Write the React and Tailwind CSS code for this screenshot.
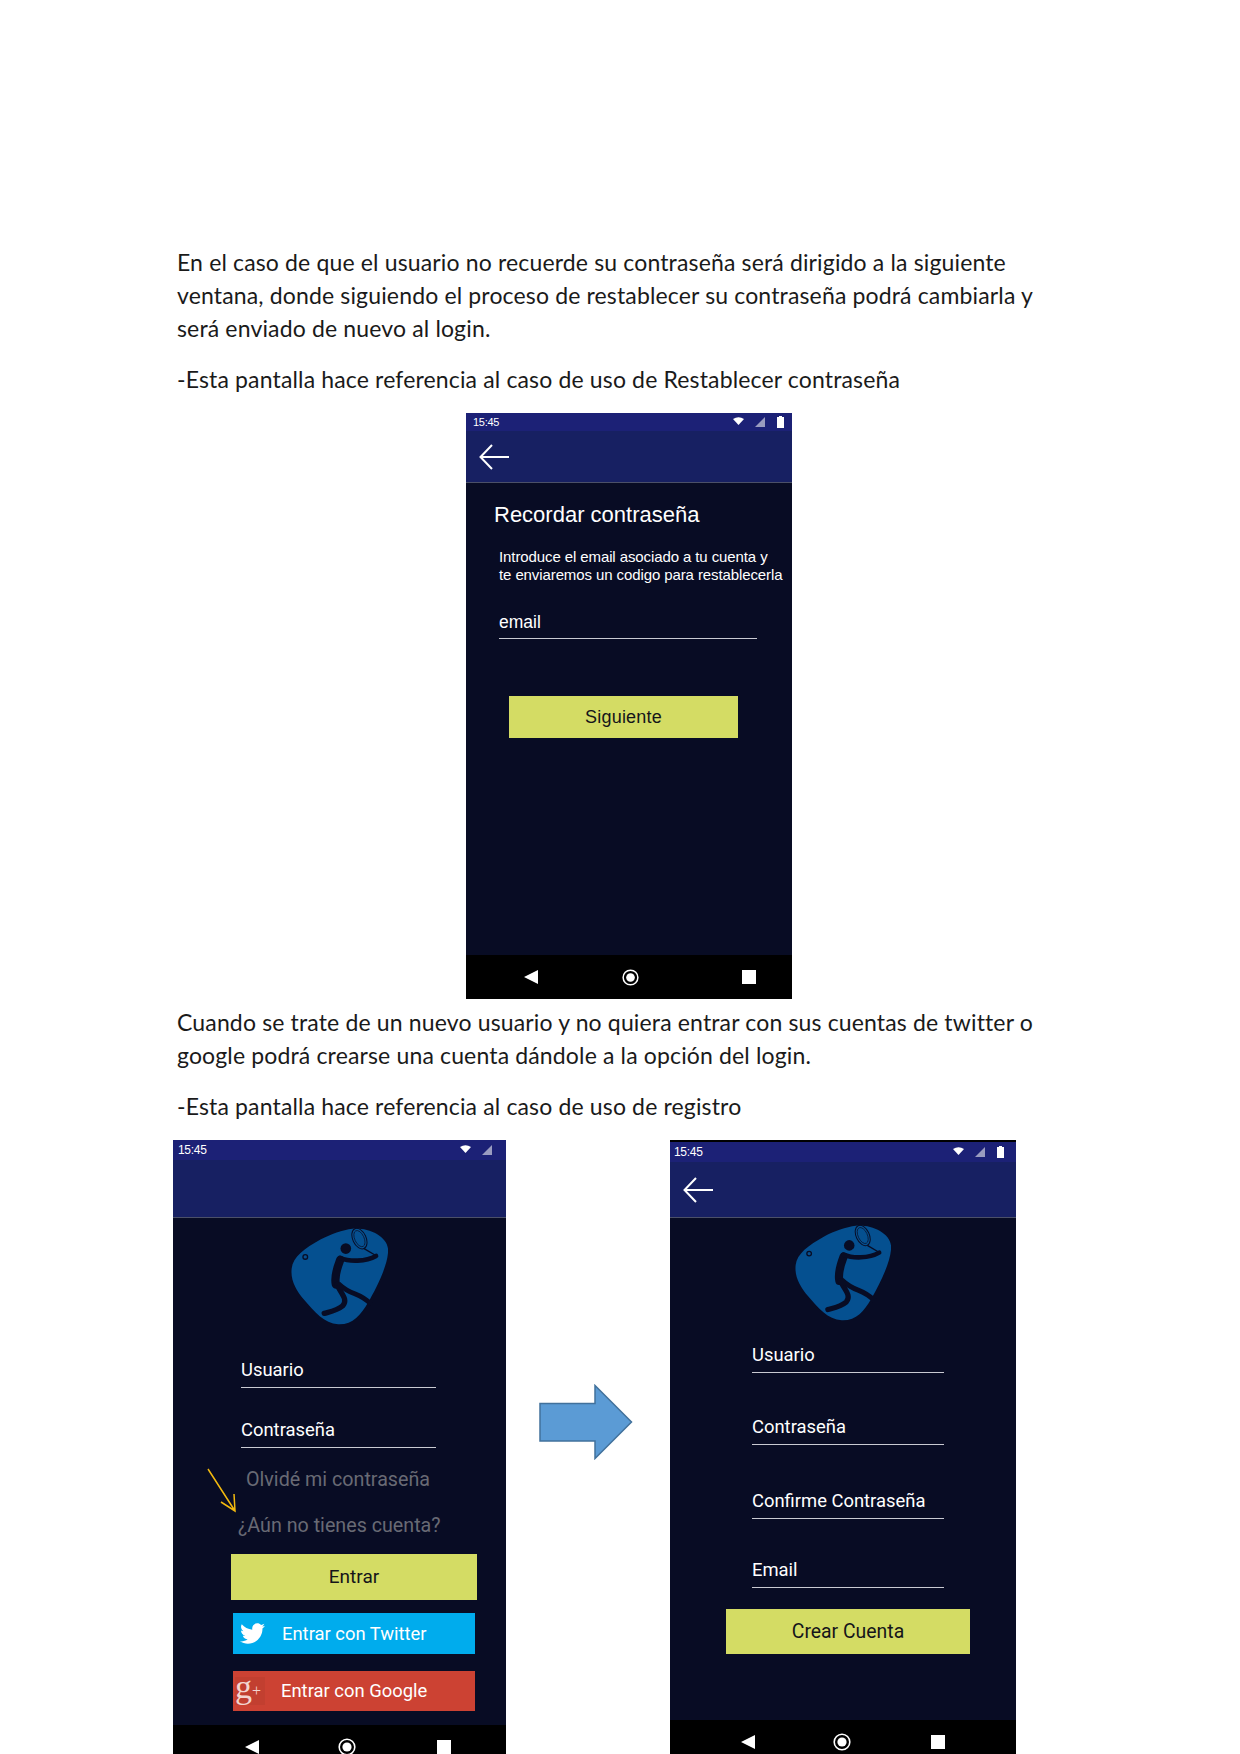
import React from 'react';
import { FaTwitter } from 'react-icons/fa';

const TennisLogo = ({ className }) => (
    <svg viewBox="30 38 292 292" className={className}>
        <path d="M215 40 C262 36 318 62 322 100 C326 140 290 215 262 262 C240 300 215 330 172 328 C130 326 100 290 70 255 C45 225 28 195 32 160 C36 125 70 100 120 72 C150 56 185 44 215 40 Z" fill="#055090" />
        <circle cx="195" cy="100" r="16" fill="#080c24" />
        <path d="M178 134 C168 160 160 185 165 208" fill="none" stroke="#080c24" strokeWidth="25" strokeLinecap="round" />
        <path d="M168 208 C182 238 202 252 186 272 C168 287 148 290 130 295" fill="none" stroke="#080c24" strokeWidth="16" strokeLinecap="round" />
        <path d="M178 128 C205 140 255 140 286 122" fill="none" stroke="#080c24" strokeWidth="14" strokeLinecap="round" />
        <path d="M172 205 C190 222 205 230 222 236 C240 243 258 254 272 268" fill="none" stroke="#080c24" strokeWidth="15" />
        <ellipse cx="236" cy="70" rx="20" ry="33" transform="rotate(-25 236 70)" fill="none" stroke="#080c24" strokeWidth="3" />
        <ellipse cx="236" cy="70" rx="14" ry="26" transform="rotate(-25 236 70)" fill="none" stroke="#080c24" strokeWidth="2" />
        <path d="M250 100 L284 120" stroke="#080c24" strokeWidth="4" />
        <circle cx="73" cy="125" r="7" fill="none" stroke="#080c24" strokeWidth="4" />
    </svg>
);

const BackArrow = ({ className }) => (
    <svg viewBox="0 0 30 26" className={className}>
        <path d="M30 13 H2 M13 1 L1.5 13 L13 25" fill="none" stroke="white" strokeWidth="2" />
    </svg>
);

const StatusBar = ({ battery = true, height, pad, icons, text }) => (
    <div className={`${height} ${pad} ${text} bg-[#1c2176] flex items-center text-white font-['Liberation_Sans'] tracking-[-0.3px] shrink-0`}>
        <span>15:45</span>
        <svg viewBox="0 0 53 14" className={`w-[53px] h-[14px] ml-auto shrink-0 ${icons}`}>
            <path d="M1 4 Q6.5 0.5 12 4 L6.5 10 Z" fill="white" />
            <path d="M33 12 L33 2 L23 12 Z" fill="#9a9cc0" />
            {battery && <path d="M47 2 V1 H50 V2 H52 V13 H45 V2 Z" fill="white" />}
        </svg>
    </div>
);

const NavBar = ({ pad, gapA, gapB, ring = 'w-[17px] h-[17px]' }) => (
    <div className={`h-[44px] bg-black flex items-center shrink-0 ${pad}`}>
        <svg viewBox="0 0 14 14" className="w-[14px] h-[14px]"><path d="M14 0 V14 L0 7 Z" fill="white" /></svg>
        <svg viewBox="0 0 18 18" className={`${ring} ${gapA}`}>
            <circle cx="9" cy="9" r="7.8" fill="none" stroke="white" strokeWidth="1.6" />
            <circle cx="9" cy="9" r="4.6" fill="white" />
        </svg>
        <div className={`w-[14px] h-[14px] bg-white ${gapB}`} />
    </div>
);

const Phone = ({ width, height, topLine, status, barHeight, back, nav, children }) => (
    <div className={`${width} ${height} flex flex-col bg-[#080c24] shrink-0 overflow-hidden`}>
        {topLine && <div className="h-[2px] bg-black shrink-0" />}
        <StatusBar {...status} />
        <div className={`${barHeight} bg-[#172062] border-b border-[#4b5068] flex items-center pl-[13px] shrink-0`}>
            {back && <BackArrow className="w-[30px] h-[26px]" />}
        </div>
        <div className="flex-1 flex flex-col">{children}</div>
        {nav}
    </div>
);

const Field = ({ label, className }) => (
    <div className={`h-[28px] border-b border-[#c9cad2] text-white text-[18.4px] leading-[20px] font-[Roboto] ${className}`}>
        {label}
    </div>
);

const Paragraph = ({ children, className = '' }) => (
    <p className={`text-[23px] leading-[33px] font-[Lato] text-[#1a1a1a] tracking-[0.15px] whitespace-nowrap ${className}`}>
        {children}
    </p>
);

export default function App() {
    return (
        <div className="relative w-[1240px] h-[1754px] bg-white overflow-hidden">
            <div className="pt-[246px] pl-[177px]">
                <Paragraph>En el caso de que el usuario no recuerde su contraseña será dirigido a la siguiente</Paragraph>
                <Paragraph>ventana, donde siguiendo el proceso de restablecer su contraseña podrá cambiarla y</Paragraph>
                <Paragraph>será enviado de nuevo al login.</Paragraph>
                <Paragraph className="mt-[18px]">-Esta pantalla hace referencia al caso de uso de Restablecer contraseña</Paragraph>
            </div>

            <div className="mt-[17px] pl-[466px]">
                <Phone
                    width="w-[326px]"
                    height="h-[586px]"
                    status={{ height: 'h-[18px]', pad: 'pl-[7px]', icons: 'mr-[7px]', text: 'text-[11px]' }}
                    barHeight="h-[52px]"
                    back
                    nav={<NavBar pad="pl-[58px]" gapA="ml-[84px]" gapB="ml-[103px]" />}
                >
                    <div className="font-['Liberation_Sans'] text-white pl-[33px]">
                        <h1 className="text-[22px] leading-[28px] mt-[18px] -ml-[5px] whitespace-nowrap">Recordar contraseña</h1>
                        <p className="text-[15px] leading-[18px] mt-[19px] tracking-[-0.1px] whitespace-nowrap">
                            Introduce el email asociado a tu cuenta y<br />te enviaremos un codigo para restablecerla
                        </p>
                        <div className="w-[258px] h-[28px] border-b border-[#c9cad2] text-[17.5px] leading-[22px] mt-[27px]">email</div>
                        <div className="w-[229px] h-[42px] ml-[10px] mt-[57px] bg-[#d4dc64] text-[#15151a] text-[18px] tracking-[0.2px] flex items-center justify-center">
                            Siguiente
                        </div>
                    </div>
                </Phone>
            </div>

            <div className="pl-[177px] pt-[7px]">
                <Paragraph>Cuando se trate de un nuevo usuario y no quiera entrar con sus cuentas de twitter o</Paragraph>
                <Paragraph>google podrá crearse una cuenta dándole a la opción del login.</Paragraph>
                <Paragraph className="mt-[18px]">-Esta pantalla hace referencia al caso de uso de registro</Paragraph>
            </div>

            <div className="flex mt-[17px] pl-[173px]">
                <Phone
                    width="w-[333px]"
                    height="h-[629px]"
                    status={{ height: 'h-[20px]', pad: 'pl-[5px]', icons: '-mr-[6px]', text: 'text-[12px]', battery: false }}
                    barHeight="h-[58px]"
                    nav={<NavBar pad="pl-[72px]" gapA="ml-[79px]" gapB="ml-[81px]" ring="w-[18px] h-[18px]" />}
                >
                    <div className="flex flex-col">
                        <TennisLogo className="w-[97px] h-[97px] ml-[118px] mt-[10px]" />
                        <Field label="Usuario" className="w-[195px] ml-[68px] mt-[35px]" />
                        <Field label="Contraseña" className="w-[195px] ml-[68px] mt-[32px]" />
                        <div className="text-[19.7px] leading-[24px] font-[Roboto] text-[#686a74] ml-[73px] mt-[20px] whitespace-nowrap">Olvidé mi contraseña</div>
                        <div className="text-[19.7px] leading-[24px] font-[Roboto] text-[#686a74] ml-[65px] mt-[22px] whitespace-nowrap">¿Aún no tienes cuenta?</div>
                        <div className="w-[246px] h-[46px] ml-[58px] mt-[16px] bg-[#d4dc64] text-[#15151a] text-[19px] font-[Roboto] flex items-center justify-center">Entrar</div>
                        <div className="w-[242px] h-[41px] ml-[60px] mt-[13px] bg-[#00aced] text-white text-[18.4px] font-[Roboto] flex items-center pl-[7px]">
                            <FaTwitter className="w-[25px] h-[25px]" />
                            <span className="ml-[17px]">Entrar con Twitter</span>
                        </div>
                        <div className="w-[242px] h-[40px] ml-[60px] mt-[17px] bg-[#cc4233] text-white text-[18.4px] font-[Roboto] flex items-center pl-[2px]">
                            <span className="w-[30px] h-[28px] bg-[#c23f30] text-[#f3d5d0] font-['Liberation_Serif'] flex items-center">
                                <span className="text-[34px] leading-[24px] pb-[8px]">g</span>
                                <span className="text-[16px] leading-[16px]">+</span>
                            </span>
                            <span className="ml-[16px]">Entrar con Google</span>
                        </div>
                    </div>
                </Phone>

                <div className="w-[164px] shrink-0 flex items-start pl-[33px] pt-[244px]">
                    <svg viewBox="0 0 94 76" className="w-[94px] h-[76px]">
                        <path d="M1 19.5 H56 V1.5 L92.5 38 L56 74.5 V57 H1 Z" fill="#5b9bd5" stroke="#41719c" strokeWidth="1.5" />
                    </svg>
                </div>

                <Phone
                    width="w-[346px]"
                    height="h-[624px]"
                    topLine
                    status={{ height: 'h-[20px]', pad: 'pl-[4px]', icons: 'mr-[11px]', text: 'text-[12px]' }}
                    barHeight="h-[56px]"
                    back
                    nav={<NavBar pad="pl-[71px]" gapA="ml-[78px]" gapB="ml-[80px]" ring="w-[18px] h-[18px]" />}
                >
                    <div className="flex flex-col">
                        <TennisLogo className="w-[96px] h-[96px] ml-[125px] mt-[7px]" />
                        <Field label="Usuario" className="w-[192px] ml-[82px] mt-[24px]" />
                        <Field label="Contraseña" className="w-[192px] ml-[82px] mt-[44px]" />
                        <Field label="Confirme Contraseña" className="w-[192px] ml-[82px] mt-[46px] whitespace-nowrap" />
                        <Field label="Email" className="w-[192px] ml-[82px] mt-[41px]" />
                        <div className="w-[244px] h-[45px] ml-[56px] mt-[21px] bg-[#d4dc64] text-[#15151a] text-[19.4px] font-[Roboto] flex items-center justify-center">Crear Cuenta</div>
                    </div>
                </Phone>
            </div>

            {/* yellow hand-placed arrow lying over the login mock-up */}
            <svg viewBox="0 0 32 46" className="absolute left-[206px] top-[1467px] w-[32px] h-[46px]">
                <path d="M2 2 L29 44 M15 35 L29 44 L28 27" fill="none" stroke="#f2b90f" strokeWidth="1.5" />
            </svg>
        </div>
    );
}
